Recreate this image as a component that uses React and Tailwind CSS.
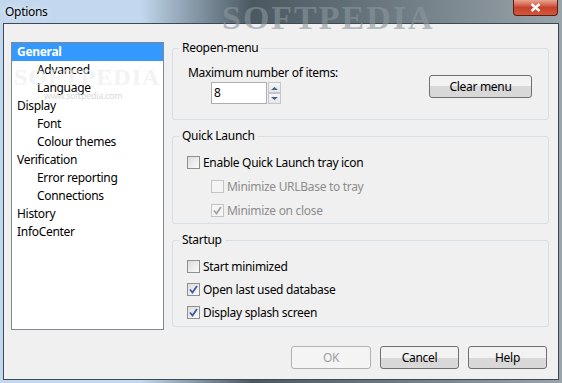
const tree = [
  ['General', 0],
  ['Advanced', 1],
  ['Language', 1],
  ['Display', 0],
  ['Font', 1],
  ['Colour themes', 1],
  ['Verification', 0],
  ['Error reporting', 1],
  ['Connections', 1],
  ['History', 0],
  ['InfoCenter', 0],
];

function Check({ checked, disabled }) {
  return (
    <span
      className={`relative inline-flex h-[13px] w-[13px] shrink-0 items-center justify-center border ${
        disabled ? 'border-[#c4c4c4] bg-[#f4f4f4]' : 'border-[#8e8f8f] bg-gradient-to-br from-[#dcdcdc] to-[#fbfbfb]'
      }`}
    >
      {checked && (
        <svg width="9" height="9" viewBox="0 0 9 9">
          <path
            d="M1 4.5 L3.5 7.5 L8 1"
            fill="none"
            stroke={disabled ? '#a2a2a2' : '#3d5aa5'}
            strokeWidth="1.8"
          />
        </svg>
      )}
    </span>
  );
}

function CheckRow({ label, checked, disabled, indent }) {
  return (
    <div className={`flex h-[13px] items-center gap-[3px] ${indent ? 'pl-[38px]' : 'pl-[14px]'}`}>
      <Check checked={checked} disabled={disabled} />
      <span className={disabled ? 'text-[#8d8d8d]' : 'text-black'}>{label}</span>
    </div>
  );
}

function Group({ title, height, children }) {
  return (
    <section className={`relative rounded-[3px] border border-[#d5dfe5] ${height}`}>
      <span className="absolute -top-[9px] left-[6px] bg-[#f0f0f0] px-[3px] leading-[16px]">{title}</span>
      {children}
    </section>
  );
}

function Button({ children, disabled, className = '' }) {
  return (
    <button
      className={`h-[23px] rounded-[3px] border text-[12px] ${
        disabled
          ? 'border-[#adb2b5] bg-[#f4f4f4] text-[#a0a0a0]'
          : 'border-[#707070] bg-gradient-to-b from-[#f2f2f2] from-50% to-[#d8d8d8] to-50% text-black'
      } ${className}`}
    >
      {children}
    </button>
  );
}

export default function App() {
  return (
    <div
      className="relative h-[383px] w-[562px] overflow-hidden bg-gradient-to-r from-[#c3d8ee] from-25% via-[#4a5861] via-45% to-[#9aa5ab] text-[12px] tracking-[-0.3px] text-black"
      style={{ fontFamily: '"Noto Sans", "Open Sans", sans-serif' }}
    >
      {/* title bar */}
      <div className="relative flex h-[23px] items-center pl-[5px]">
        <span className="text-[12px] text-black [text-shadow:0_0_6px_#ffffff]">Options</span>
        <span className="pointer-events-none absolute left-[222px] top-[-8px] font-['Liberation_Serif'] text-[34px] font-bold tracking-[2px] text-[#8b969c] opacity-60">
          SOFTPEDIA
        </span>
        <div className="absolute right-[4px] top-0 flex h-[16px] w-[45px] items-center justify-center rounded-b-[4px] border border-t-0 border-[#5a1d14] bg-gradient-to-b from-[#e8a493] via-[#c7422a] to-[#d2573c]">
          <svg width="11" height="9" viewBox="0 0 11 9">
            <path d="M1.5 1 L9.5 8 M9.5 1 L1.5 8" stroke="#fff" strokeWidth="2.4" />
          </svg>
        </div>
      </div>

      {/* client area */}
      <div className="mx-[3px] flex h-[357px] flex-col border border-[#3c4a55] bg-[#f0f0f0]">
        <div className="flex gap-[8px] pl-[7px] pt-[18px]">
          <div className="relative h-[288px] w-[153px] border border-[#828790] bg-white">
            {tree.map(([label, level], i) => (
              <div
                key={label}
                className={`flex h-[18px] items-center ${level ? 'pl-[25px]' : 'pl-[5px]'} ${
                  i === 0 ? 'bg-[#3399ff] font-bold text-white' : 'text-black'
                }`}
              >
                {label}
              </div>
            ))}
            <span className="pointer-events-none absolute left-[2px] top-[16px] font-['Liberation_Serif'] text-[24px] font-bold tracking-[1px] text-[#ececec] opacity-60">
              SOFTPEDIA
            </span>
            <span className="pointer-events-none absolute left-[32px] top-[46px] text-[9px] text-[#dadada]">www.softpedia.com</span>
          </div>

          <div className="flex w-[377px] flex-col gap-[16px] pt-[6px]">
            <Group title="Reopen-menu" height="h-[72px]">
              <div className="flex items-end justify-between pl-[15px] pr-[16px] pt-[16px]">
                <div className="flex flex-col">
                  <span className="leading-[16px]">Maximum number of items:</span>
                  <div className="mt-[1px] flex gap-[1px] pl-[23px]">
                    <div className="flex h-[22px] w-[56px] items-center border border-[#abadb3] bg-white pl-[2px]">8</div>
                    <div className="flex flex-col">
                      {['M3.5 1 L7 4 L0 4 Z', 'M0 0 L7 0 L3.5 3 Z'].map((d) => (
                        <span
                          key={d}
                          className="flex h-[11px] w-[13px] items-center justify-center border border-[#c2c7cc] bg-gradient-to-b from-[#f7f7f7] to-[#e4e6ea]"
                        >
                          <svg width="7" height="4" viewBox="0 0 7 4">
                            <path d={d} fill="#4d6185" />
                          </svg>
                        </span>
                      ))}
                    </div>
                  </div>
                </div>
                <Button className="mb-[6px] w-[103px]">Clear menu</Button>
              </div>
            </Group>

            <Group title="Quick Launch" height="h-[88px]">
              <div className="flex flex-col gap-[11px] pt-[19px]">
                <CheckRow label="Enable Quick Launch tray icon" />
                <CheckRow label="Minimize URLBase to tray" disabled indent />
                <CheckRow label="Minimize on close" checked disabled indent />
              </div>
            </Group>

            <Group title="Startup" height="h-[87px]">
              <div className="flex flex-col gap-[10px] pt-[19px]">
                <CheckRow label="Start minimized" />
                <CheckRow label="Open last used database" checked />
                <CheckRow label="Display splash screen" checked />
              </div>
            </Group>
          </div>
        </div>

        <div className="mt-auto flex justify-end gap-[9px] pb-[10px] pr-[11px]">
          <Button disabled className="w-[80px]">OK</Button>
          <Button className="w-[79px]">Cancel</Button>
          <Button className="w-[79px]">Help</Button>
        </div>
      </div>
    </div>
  );
}
